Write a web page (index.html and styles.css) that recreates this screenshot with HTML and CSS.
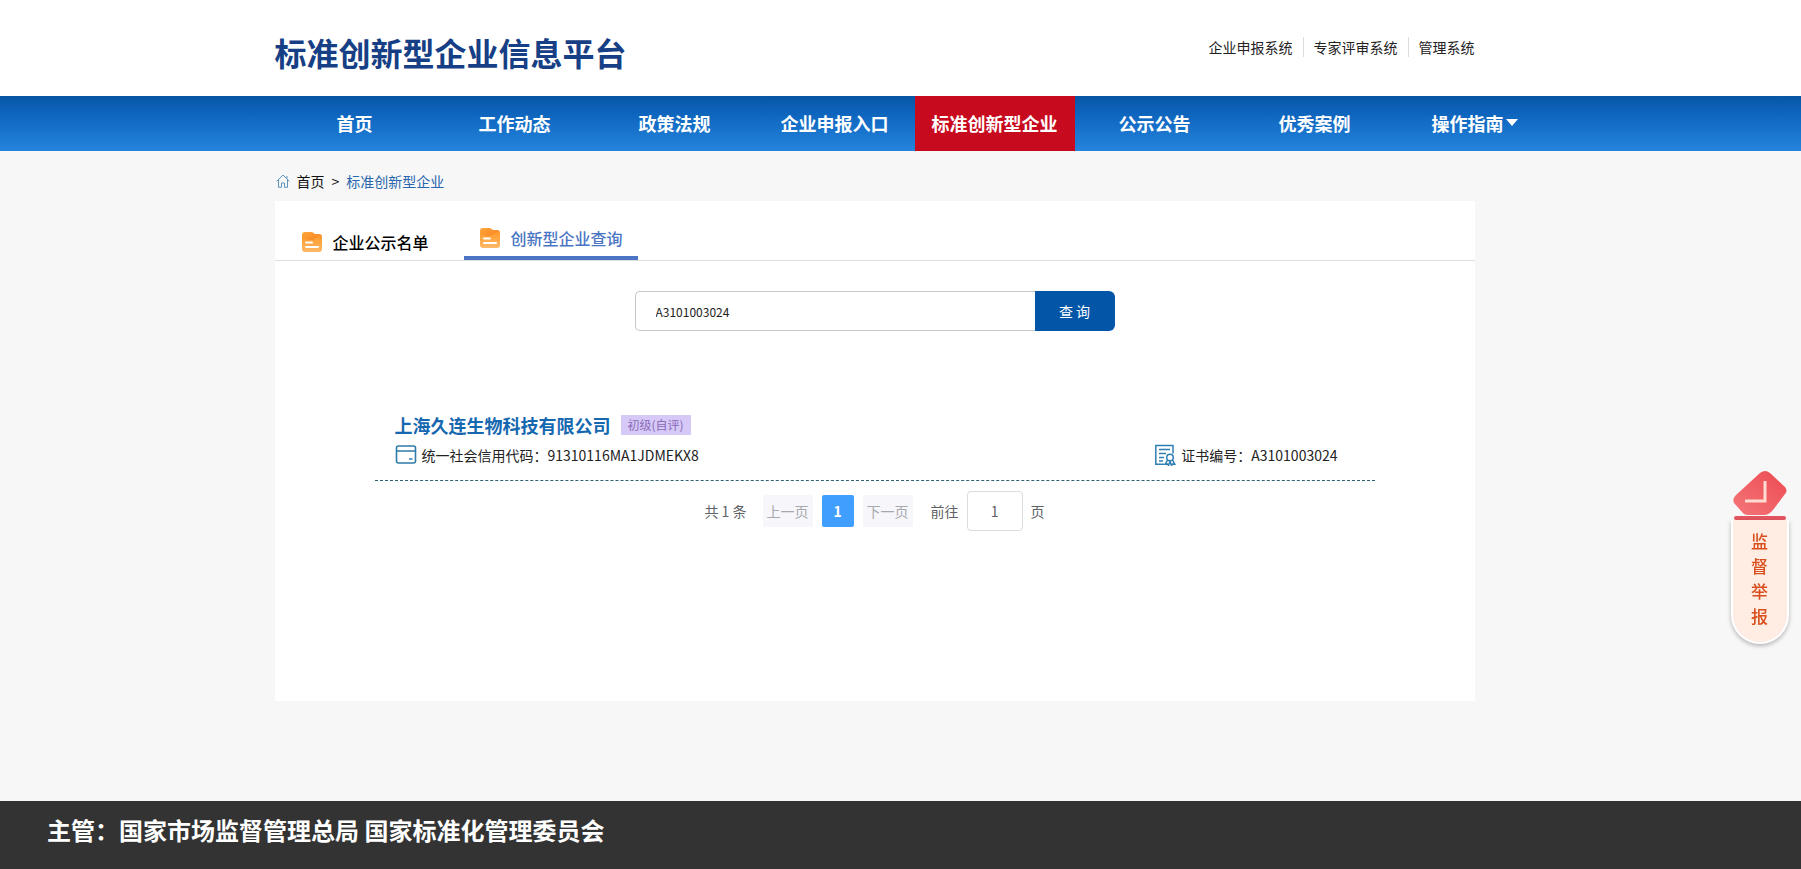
FILE: index.html
```html
<!DOCTYPE html>
<html lang="zh-CN">
<head>
<meta charset="utf-8">
<title>标准创新型企业信息平台</title>
<link rel="stylesheet" href="styles.css">
</head>
<body>
<svg class="defs" aria-hidden="true">
  <defs>
    <linearGradient id="folderBack" x1="0" y1="0" x2="1" y2="1"><stop offset="0" stop-color="#ffa63c"/><stop offset="1" stop-color="#f57c1a"/></linearGradient>
    <linearGradient id="folderFront" x1="0" y1="0" x2="0" y2="1"><stop offset="0" stop-color="#ff9a2c"/><stop offset="1" stop-color="#ffb968"/></linearGradient>
    <linearGradient id="badge" x1="1" y1="0" x2="0" y2="1"><stop offset="0" stop-color="#ec4a50"/><stop offset="1" stop-color="#f4777a"/></linearGradient>
  </defs>
  <symbol id="folder" viewBox="0 0 22 22">
    <path d="M1 4a3 3 0 0 1 3-3h7l3 2h4a3 3 0 0 1 3 3v6H1z" fill="url(#folderBack)"/>
    <path d="M1 7l7 2c4 1 7-3 10-4h3v13a3 3 0 0 1-3 3H4a3 3 0 0 1-3-3z" fill="url(#folderFront)"/>
    <path d="M5 11.500h6M5 16h12" stroke="#fff" stroke-width="2" stroke-linecap="round"/>
  </symbol>
</svg>
<div class="page">
  <header class="header">
    <div class="wrap header-row">
      <h1 class="logo">标准创新型企业信息平台</h1>
      <div class="systems">
        <a href="#">企业申报系统</a>
        <a href="#">专家评审系统</a>
        <a href="#">管理系统</a>
      </div>
    </div>
  </header>
  <nav class="nav">
    <div class="wrap nav-row">
      <a href="#">首页</a>
      <a href="#">工作动态</a>
      <a href="#">政策法规</a>
      <a href="#">企业申报入口</a>
      <a href="#" class="active">标准创新型企业</a>
      <a href="#">公示公告</a>
      <a href="#">优秀案例</a>
      <a href="#">操作指南<span class="caret"></span></a>
    </div>
  </nav>
  <main class="main">
    <div class="wrap">
      <div class="crumbs">
        <svg class="home" viewBox="0 0 14 14" fill="none" stroke="#5b93bd"><path d="M.7 7.300 7 1l6.300 6.300M2.500 6v7.300h3V9h3v4.300h3V6M11 4.500V2"/></svg>
        <a href="#">首页</a>
        <span>&gt;</span>
        <a href="#" class="current">标准创新型企业</a>
      </div>
      <section class="card">
        <div class="tabs">
          <button type="button" class="tab"><svg><use href="#folder"/></svg>企业公示名单</button>
          <button type="button" class="tab selected"><svg><use href="#folder"/></svg>创新型企业查询</button>
        </div>
        <form class="search">
          <input type="text" value="A3101003024" aria-label="证书编号">
          <button type="button">查 询</button>
        </form>
        <article class="result">
          <div class="result-title">
            <h2><a href="#">上海久连生物科技有限公司</a></h2>
            <span class="tag">初级(自评)</span>
          </div>
          <div class="result-info">
            <span class="field">
              <svg viewBox="0 0 22 22" fill="none" stroke="#2f7aa8" stroke-width="1.600"><rect x="1.500" y="2" width="19" height="17" rx="2"/><path d="M1.500 7h19M14 15h3.500"/></svg>
              <span>统一社会信用代码：91310116MA1JDMEKX8</span>
            </span>
            <span class="field">
              <svg viewBox="0 0 22 22" fill="none" stroke="#2f7fb5" stroke-width="1.500"><path d="M10.500 20.200H1.800V1.500H19v8"/><path d="M5 5.500h11M5 9.500h7M5 13.500h5M5 17h4"/><circle cx="16" cy="13.500" r="3.300"/><path d="m13.500 16-2.200 4.200 2.200-.2 1 1.500 1.500-4 1.500 4 1-1.500 2.200.2-2.200-4.200"/></svg>
              <span>证书编号：A3101003024</span>
            </span>
          </div>
        </article>
        <div class="pager">
          <span class="total">共 1 条</span>
          <button type="button" disabled>上一页</button>
          <button type="button" class="on">1</button>
          <button type="button" disabled>下一页</button>
          <label class="jump">前往<input type="text" value="1">页</label>
        </div>
      </section>
    </div>
  </main>
  <footer class="footer">主管：国家市场监督管理总局 国家标准化管理委员会</footer>
</div>
<a href="#" class="report">
  <svg viewBox="0 0 54 46"><path d="M27 3Q32-1 37 3L52 17q3 4 0 7L40 40q-4 5-9 5H15q-4 0-6-3L1 33q-2-4 2-8z" fill="url(#badge)"/><path d="M12 31h20V11" fill="none" stroke="#ffdcd2" stroke-width="3"/></svg>
  <span class="report-bar"></span>
  <span class="report-body">监督举报</span>
</a>
</body>
</html>
```
FILE: styles.css
```css
* { box-sizing: border-box; }
body {
  margin: 0;
  font: 14px/20px "Noto Sans CJK SC", "Noto Sans", sans-serif;
  color: #222;
  background: #f7f7f7;
}
a { color: inherit; text-decoration: none; }
button, input { font: inherit; margin: 0; }
.defs { position: absolute; width: 0; height: 0; }
.page { min-height: 100vh; display: flex; flex-direction: column; }
.header, .nav, .main { padding-right: 52px; }
.wrap { width: 1200px; max-width: 100%; margin: 0 auto; }

.header { background: #fff; }
.header-row { height: 96px; padding-bottom: 2px; display: flex; justify-content: space-between; align-items: center; }
.logo { margin: 10px 0 0; font-size: 32px; line-height: 40px; color: #173f85; }
.systems { display: flex; }
.systems a { padding: 0 10px; border-left: 1px solid #ddd; }
.systems a:first-child { border-left: 0; }
.systems a:last-child { padding-right: 0; }

.nav { height: 55px; background: linear-gradient(#0756a5, #0f66bf 35%, #2584dc); }
.nav-row { display: flex; }
.nav-row a {
  flex: 0 0 160px;
  display: flex;
  justify-content: center;
  align-items: center;
  height: 55px;
  padding-bottom: 2px;
  font-size: 18px;
  font-weight: 700;
  color: #fff;
}
.nav-row .active { background: #c80a1e; }
.caret { margin-left: 2px; border: 6px solid transparent; border-top: 7px solid #fff; border-bottom: 0; }

.main { flex: 1; padding-bottom: 100px; }
.crumbs { height: 50px; padding: 10px 0 0 1px; display: flex; align-items: center; gap: 7px; color: #111; }
.crumbs .current { color: #2866ad; }
.home { width: 14px; height: 14px; }

.card { min-height: 500px; background: #fff; }
.tabs { height: 60px; padding-left: 14px; display: flex; align-items: flex-end; gap: 23px; border-bottom: 1px solid #ddd; }
.tab {
  height: 36px;
  padding: 0 12px;
  display: flex;
  align-items: center;
  gap: 10px;
  border: 0;
  background: none;
  font-size: 16px;
  font-weight: 500;
  color: #000;
}
.tab svg { width: 22px; height: 22px; }
.tab.selected { height: 40px; padding: 0 15px; border-bottom: 4px solid #4a75c4; color: #4a75c4; }

.search { width: 480px; margin: 30px auto 0; display: flex; }
.search input {
  flex: 1;
  min-width: 0;
  height: 40px;
  padding: 0 20px;
  border: 1px solid #c4c8cc;
  border-right: 0;
  border-radius: 5px 0 0 5px;
  font-size: 12px;
  color: #222;
}
.search button { width: 80px; height: 40px; border: 0; border-radius: 0 6px 6px 0; background: #0355a8; color: #fff; }

.result { margin: 79px 100px 0; padding: 0 37px 10px 20px; border-bottom: 1px dashed #2f6272; }
.result-title { display: flex; align-items: center; gap: 10px; height: 30px; }
.result-title h2 { margin: 0; font-size: 18px; line-height: 28px; color: #1568b0; }
.tag { padding: 0 7px; background: #d6c8f7; font-size: 12px; line-height: 20px; color: #8a6cb8; }
.result-info { height: 30px; display: flex; justify-content: space-between; align-items: center; }
.field { display: flex; align-items: center; gap: 5px; }
.field svg { width: 22px; height: 22px; }

.pager { margin-top: 10px; display: flex; justify-content: center; align-items: center; color: #606266; }
.pager .total { margin-right: 16px; }
.pager button { height: 32px; min-width: 32px; margin-right: 9px; padding: 0 4px; border: 0; border-radius: 2px; background: #f7f7fb; color: #a6a8ae; }
.pager .on { background: #409eff; color: #fff; font-weight: 700; }
.jump { margin-left: 9px; display: flex; align-items: center; gap: 8px; }
.jump input { width: 56px; height: 40px; border: 1px solid #dcdcdf; border-radius: 4px; text-align: center; color: #606266; }

.footer { padding: 13px 47px 23px; background: #333; font-size: 24px; font-weight: 700; line-height: 32px; color: #fff; }

.report { position: fixed; top: 470px; right: 12px; width: 58px; display: flex; flex-direction: column; align-items: center; }
.report svg { width: 54px; height: 46px; }
.report-bar { width: 52px; height: 4px; border-radius: 2px; background: #e35560; }
.report-body {
  width: 58px;
  height: 124px;
  padding: 8px 18px 0;
  border: 2px solid #fff;
  border-top: 0;
  border-radius: 0 0 29px 29px;
  background: #ffece3;
  box-shadow: 0 2px 4px #0004;
  font-size: 17px;
  font-weight: 500;
  line-height: 25px;
  color: #d9501e;
}
```
